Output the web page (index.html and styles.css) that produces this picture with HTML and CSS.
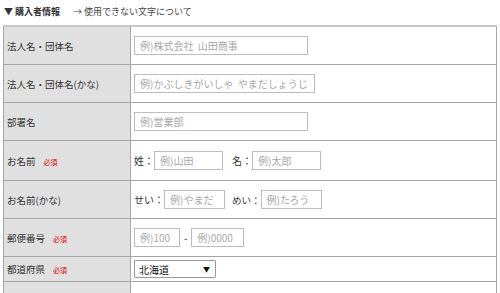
FILE: index.html
```html
<!DOCTYPE html>
<html lang="ja">
<head>
<meta charset="utf-8">
<link rel="stylesheet" href="styles.css">
</head>
<body>
<div class="head">
  <span class="title">▼ 購入者情報</span>
  <span class="link">→ 使用できない文字について</span>
</div>
<table class="form">
  <tr>
    <th>法人名・団体名</th>
    <td><input class="w174" type="text" placeholder="例)株式会社&nbsp;&nbsp;山田商事"></td>
  </tr>
  <tr>
    <th>法人名・団体名(かな)</th>
    <td><input class="w181" type="text" placeholder="例)かぶしきがいしゃ&nbsp;&nbsp;やまだしょうじ"></td>
  </tr>
  <tr>
    <th>部署名</th>
    <td><input class="w174" type="text" placeholder="例)営業部"></td>
  </tr>
  <tr class="tall">
    <th>お名前<span class="req">必須</span></th>
    <td><div class="pair"><span class="lbl">姓：</span><input class="w69" type="text" placeholder="例)山田"><span class="lbl l2">名：</span><input class="w69" type="text" placeholder="例)太郎"></div></td>
  </tr>
  <tr>
    <th>お名前(かな)</th>
    <td><div class="pair"><span class="lbl">せい：</span><input class="w61" type="text" placeholder="例)やまだ"><span class="lbl l3">めい：</span><input class="w61" type="text" placeholder="例)たろう"></div></td>
  </tr>
  <tr>
    <th>郵便番号<span class="req">必須</span></th>
    <td><div class="pair"><input class="w46" type="text" placeholder="例)100"><span class="dash">-</span><input class="w53" type="text" placeholder="例)0000"></div></td>
  </tr>
  <tr class="short">
    <th>都道府県<span class="req">必須</span></th>
    <td><div class="select"><span>北海道</span><span class="arrow">▼</span></div></td>
  </tr>
  <tr class="last">
    <th></th>
    <td></td>
  </tr>
</table>
</body>
</html>
```
FILE: styles.css
```css
html, body {
  margin: 0;
  padding: 0;
  background: #fff;
}
body {
  font-family: "Noto Sans CJK JP", "Noto Sans", sans-serif;
  font-size: 9.5px;
  color: #333;
  padding: 0 3px;
  overflow: hidden;
}
.head {
  height: 28px;
  display: flex;
  align-items: center;
  gap: 13px;
  padding-left: 1px;
  margin-top: -3px;
}
.title {
  font-weight: bold;
  font-size: 9px;
}
.link {
  color: #444;
  font-size: 9px;
}
.form {
  border-collapse: collapse;
  width: 494px;
  border: 1px solid #a6a6a6;
  border-top: 2px solid #c8c8c8;
}
.form th, .form td {
  border-top: 1px solid #a6a6a6;
  height: 37px;
  padding: 0;
  vertical-align: middle;
}
.form th {
  width: 123px;
  background: #e0e0e0;
  text-align: left;
  font-weight: normal;
  padding-left: 3px;
  border-right: 1px solid #a6a6a6;
  color: #333;
}
.form td {
  padding-left: 3px;
}
.form tr.tall th, .form tr.tall td {
  height: 39px;
}
.form tr.short th, .form tr.short td {
  height: 24px;
}
.form tr.last th, .form tr.last td {
  height: 12px;
}
.req {
  color: #e00000;
  font-size: 7px;
  margin-left: 8px;
}
input {
  box-sizing: border-box;
  height: 19px;
  border: 1px solid #bdbdbd;
  font-family: inherit;
  font-size: 10px;
  padding: 0 5px;
  margin: 0;
  display: block;
  color: #333;
}
input::placeholder {
  color: #a8a8a8;
}
.w174 { width: 174px; }
.w181 { width: 181px; }
.w69 { width: 69px; }
.w61 { width: 61px; }
.w46 { width: 46px; }
.w53 { width: 53px; }
.pair {
  display: flex;
  align-items: center;
}
.lbl {
  color: #333;
  font-size: 10px;
}
.lbl.l2 {
  margin-left: 9px;
}
.lbl.l3 {
  margin-left: 7px;
  font-size: 9.5px;
}
.dash {
  margin: 0 4px;
}
.select {
  box-sizing: border-box;
  width: 82px;
  height: 18px;
  border: 1px solid #9a9a9a;
  border-radius: 1px;
  display: flex;
  align-items: center;
  justify-content: space-between;
  padding: 0 5px 0 4px;
  font-size: 10px;
  color: #111;
}
.arrow {
  font-size: 7px;
}
```
